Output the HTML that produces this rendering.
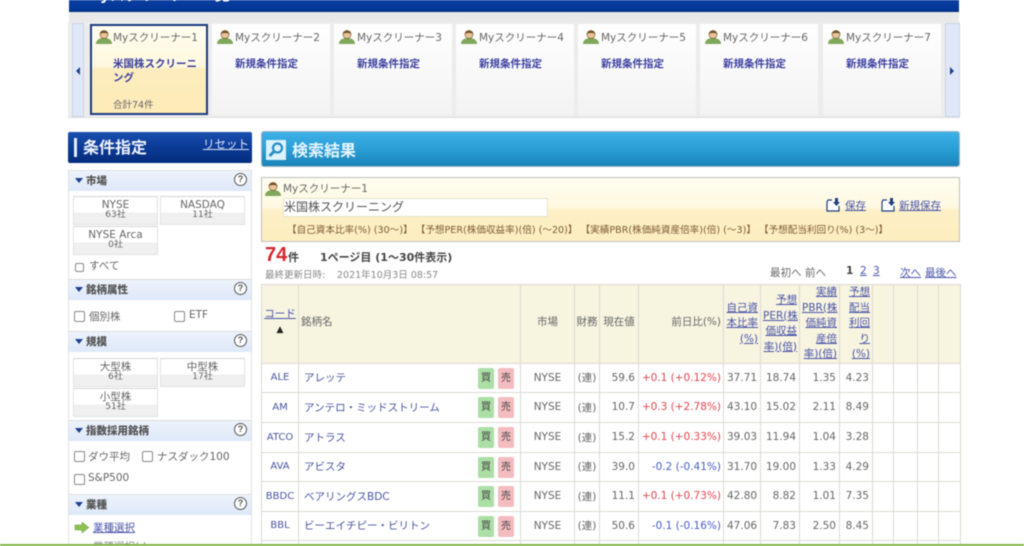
<!DOCTYPE html>
<html lang="ja">
<head>
<meta charset="utf-8">
<title>Myスクリーナー</title>
<style>
html,body{margin:0;padding:0;background:#fff}
body{width:1024px;height:546px;overflow:hidden;position:relative;font-family:"DejaVu Sans","Noto Sans CJK JP",sans-serif;font-size:10.5px;color:#555}
.a{position:absolute;white-space:nowrap}
#wrap{position:absolute;left:0;top:0;width:1024px;height:546px;overflow:hidden;filter:blur(.45px)}
.tab{position:absolute;top:24px;height:91px;background:linear-gradient(#fff,#f3f3f3);box-sizing:border-box}
.tab .nm{position:absolute;left:23px;top:6px;font-size:10.5px;color:#666;white-space:nowrap}
.tab .ic{position:absolute;left:5px;top:5px}
.tab .nw{position:absolute;left:23px;top:32px;font-size:10.5px;font-weight:bold;color:#3c3f9f;white-space:nowrap}
.sh{position:absolute;left:69px;width:182px;height:20px;background:linear-gradient(#eef3fc,#dde8f9);font-size:10.5px;font-weight:bold;color:#555}
.sh b{position:absolute;left:17px;top:2px}
.sh i{position:absolute;left:6px;top:7px;width:0;height:0;border-left:4px solid transparent;border-right:4px solid transparent;border-top:5px solid #1d3f8f}
.q{position:absolute;left:165px;top:2px;width:11px;height:11px;border:1px solid #555;border-radius:50%;text-align:center;font:bold 9px/11px "Liberation Sans",sans-serif;color:#555;background:#fff}
.bt{position:absolute;width:85px;box-sizing:border-box;border:1px solid #e2e2e2;border-top-color:#d4d4d4;background:linear-gradient(#fff 58%,#f0f0f0 58%);text-align:center;font-size:10.5px;line-height:12px;color:#666;padding-top:2px}
.bt small{display:block;font-size:9px;line-height:9px}
.cb{position:absolute;width:9px;height:9px;border:1px solid #888;border-radius:2px;background:#fff}
.lb{position:absolute;font-size:10.5px;color:#666;white-space:nowrap}
table{position:absolute;left:261px;top:284px;border-collapse:collapse;table-layout:fixed;width:699px}
td,th{border:1px solid #dadad4;padding:0 2px;font-weight:normal;font-size:10.5px;color:#666;white-space:nowrap;overflow:hidden}
th{background:#f7f4e0;line-height:15.5px}
th a{color:#4a54a8;text-decoration:underline}
th.w{text-align:right;padding:0 2px;overflow:visible}
td{position:relative;background:#fff;text-align:right;padding:0 3px 1px}
td.c{text-align:center;color:#4a55a0;padding:0 0 1px;font-size:10px}
td.n{text-align:left;color:#4a55a0;padding-left:5px}
td.m{text-align:center}
.r{color:#e2464f}.u{color:#4a5cc8}
td.r,td.u{padding-left:0;padding-right:2px}
.bb,.bs{position:absolute;top:4px;width:16px;height:21px;border-radius:2px;text-align:center;line-height:21px;font-size:10px;color:#444}
.bb{left:179px;background:#abdfa6}
.bs{left:199px;background:#f5bcc0}
</style>
</head>
<body>
<div id="wrap">

<div class="a" style="left:69px;top:0;width:890px;height:12px;background:linear-gradient(#0a3f9f,#03389a 70%,#02307f)"></div>
<div class="a" style="left:69px;top:12px;width:890px;height:10px;background:#e9e9e9"></div>
<div class="a" style="left:85px;top:-16px;font-size:15px;font-weight:bold;color:#fff">Myスクリーナー一覧</div>

<div class="a" style="left:68px;top:22px;width:892px;height:96px;background:#ececec;border-bottom:1px solid #ddd;box-sizing:border-box"></div>
<div class="a" style="left:72px;top:23px;width:12px;height:94px;background:#dfe7f8;border:1px solid #ccd4e6;box-sizing:border-box"></div>
<div class="a" style="left:76px;top:67px;width:0;height:0;border-top:4px solid transparent;border-bottom:4px solid transparent;border-right:4px solid #1d3f8f"></div>
<div class="a" style="left:945px;top:23px;width:15px;height:94px;background:#dfe7f8;border:1px solid #ccd4e6;box-sizing:border-box"></div>
<div class="a" style="left:950px;top:67px;width:0;height:0;border-top:4px solid transparent;border-bottom:4px solid transparent;border-left:4px solid #1d3f8f"></div>

<div class="tab" style="left:90px;width:118px;border:2px solid #1a3b80;background:linear-gradient(#fffdf0,#fff8de 46%,#fdedbe 50%,#fdebb8)">
  <svg class="ic" style="left:4px;top:3px" width="16" height="16" viewBox="0 0 16 16"><path d="M0 15c0-4 3-6 8-6s8 2 8 6z" fill="#7fa85a"/><circle cx="8" cy="5.500" r="4" fill="#e9c49a" stroke="#7a5a30" stroke-width=".7"/><path d="M4 5C4.500 1 11.500 1 12 5 10 3.500 6 3.500 4 5z" fill="#6b4a1f"/></svg>
  <div class="nm" style="left:21px;top:4px">Myスクリーナー1</div>
  <div class="a" style="left:21px;top:31px;width:88px;white-space:normal;font-size:10.500px;line-height:14px;font-weight:bold;color:#3c3f9f">米国株スクリーニング</div>
  <div class="a" style="left:21px;top:71px;font-size:9.500px;color:#666">合計74件</div>
</div>

<div class="tab" style="left:212px;width:118px"><svg class="ic" width="16" height="16" viewBox="0 0 16 16"><path d="M0 15c0-4 3-6 8-6s8 2 8 6z" fill="#7fa85a"/><circle cx="8" cy="5.500" r="4" fill="#e9c49a" stroke="#7a5a30" stroke-width=".7"/><path d="M4 5C4.500 1 11.500 1 12 5 10 3.500 6 3.500 4 5z" fill="#6b4a1f"/></svg><div class="nm">Myスクリーナー2</div><div class="nw">新規条件指定</div></div>
<div class="tab" style="left:334px;width:118px"><svg class="ic" width="16" height="16" viewBox="0 0 16 16"><path d="M0 15c0-4 3-6 8-6s8 2 8 6z" fill="#7fa85a"/><circle cx="8" cy="5.500" r="4" fill="#e9c49a" stroke="#7a5a30" stroke-width=".7"/><path d="M4 5C4.500 1 11.500 1 12 5 10 3.500 6 3.500 4 5z" fill="#6b4a1f"/></svg><div class="nm">Myスクリーナー3</div><div class="nw">新規条件指定</div></div>
<div class="tab" style="left:456px;width:118px"><svg class="ic" width="16" height="16" viewBox="0 0 16 16"><path d="M0 15c0-4 3-6 8-6s8 2 8 6z" fill="#7fa85a"/><circle cx="8" cy="5.500" r="4" fill="#e9c49a" stroke="#7a5a30" stroke-width=".7"/><path d="M4 5C4.500 1 11.500 1 12 5 10 3.500 6 3.500 4 5z" fill="#6b4a1f"/></svg><div class="nm">Myスクリーナー4</div><div class="nw">新規条件指定</div></div>
<div class="tab" style="left:578px;width:118px"><svg class="ic" width="16" height="16" viewBox="0 0 16 16"><path d="M0 15c0-4 3-6 8-6s8 2 8 6z" fill="#7fa85a"/><circle cx="8" cy="5.500" r="4" fill="#e9c49a" stroke="#7a5a30" stroke-width=".7"/><path d="M4 5C4.500 1 11.500 1 12 5 10 3.500 6 3.500 4 5z" fill="#6b4a1f"/></svg><div class="nm">Myスクリーナー5</div><div class="nw">新規条件指定</div></div>
<div class="tab" style="left:700px;width:118px"><svg class="ic" width="16" height="16" viewBox="0 0 16 16"><path d="M0 15c0-4 3-6 8-6s8 2 8 6z" fill="#7fa85a"/><circle cx="8" cy="5.500" r="4" fill="#e9c49a" stroke="#7a5a30" stroke-width=".7"/><path d="M4 5C4.500 1 11.500 1 12 5 10 3.500 6 3.500 4 5z" fill="#6b4a1f"/></svg><div class="nm">Myスクリーナー6</div><div class="nw">新規条件指定</div></div>
<div class="tab" style="left:823px;width:118px"><svg class="ic" width="16" height="16" viewBox="0 0 16 16"><path d="M0 15c0-4 3-6 8-6s8 2 8 6z" fill="#7fa85a"/><circle cx="8" cy="5.500" r="4" fill="#e9c49a" stroke="#7a5a30" stroke-width=".7"/><path d="M4 5C4.500 1 11.500 1 12 5 10 3.500 6 3.500 4 5z" fill="#6b4a1f"/></svg><div class="nm">Myスクリーナー7</div><div class="nw">新規条件指定</div></div>

<!-- Sidebar -->
<div class="a" style="left:68px;top:132px;width:184px;height:31px;background:linear-gradient(#1a4fb0,#0b3a95 50%,#052c7c);border-radius:2px"></div>
<div class="a" style="left:74px;top:138px;width:3px;height:19px;background:#e6eefc"></div>
<div class="a" style="left:83px;top:134px;font-size:16px;font-weight:bold;color:#eef2fb">条件指定</div>
<div class="a" style="left:203px;top:136px;font-size:11.500px;color:#dfe8fb;text-decoration:underline">リセット</div>

<div class="a" style="left:68px;top:170px;width:184px;height:376px;border:1px solid #e0e0e0;border-bottom:0;box-sizing:border-box"></div>

<div class="sh" style="top:171px"><i></i><b>市場</b><span class="q">?</span></div>
<div class="bt" style="left:73px;top:196px;height:29px">NYSE<small>63社</small></div>
<div class="bt" style="left:160px;top:196px;height:29px">NASDAQ<small>11社</small></div>
<div class="bt" style="left:73px;top:226px;height:29px">NYSE Arca<small>0社</small></div>
<div class="cb" style="left:75px;top:263px;width:7px;height:7px"></div>
<div class="lb" style="left:89px;top:258px">すべて</div>

<div class="a" style="left:69px;top:279px;width:182px;height:1px;background:#ddd"></div>
<div class="sh" style="top:280px"><i></i><b>銘柄属性</b><span class="q">?</span></div>
<div class="cb" style="left:74px;top:311px"></div>
<div class="lb" style="left:89px;top:309px">個別株</div>
<div class="cb" style="left:174px;top:311px"></div>
<div class="lb" style="left:189px;top:309px">ETF</div>

<div class="a" style="left:69px;top:331px;width:182px;height:1px;background:#ddd"></div>
<div class="sh" style="top:332px"><i></i><b>規模</b><span class="q">?</span></div>
<div class="bt" style="left:73px;top:358px;height:29px">大型株<small>6社</small></div>
<div class="bt" style="left:160px;top:358px;height:29px">中型株<small>17社</small></div>
<div class="bt" style="left:73px;top:388px;height:29px">小型株<small>51社</small></div>

<div class="a" style="left:69px;top:420px;width:182px;height:1px;background:#ddd"></div>
<div class="sh" style="top:421px"><i></i><b>指数採用銘柄</b><span class="q">?</span></div>
<div class="cb" style="left:74px;top:451px"></div>
<div class="lb" style="left:88px;top:449px">ダウ平均</div>
<div class="cb" style="left:142px;top:451px"></div>
<div class="lb" style="left:157px;top:449px">ナスダック100</div>
<div class="cb" style="left:74px;top:474px"></div>
<div class="lb" style="left:88px;top:472px">S&amp;P500</div>

<div class="a" style="left:69px;top:494px;width:182px;height:1px;background:#ddd"></div>
<div class="sh" style="top:495px"><i></i><b>業種</b><span class="q">?</span></div>
<svg class="a" style="left:74px;top:521px" width="16" height="13" viewBox="0 0 16 13"><path d="M1 4h7V1l7 5.500-7 5.500V9H1z" fill="#8cc152" stroke="#6a9a3a" stroke-width=".5"/></svg>
<div class="lb" style="left:93px;top:520px;color:#4a54a8;text-decoration:underline">業種選択</div>
<div class="lb" style="left:93px;top:539px;color:#888">業種選択(-)</div>

<!-- Results header -->
<div class="a" style="left:261px;top:131px;width:699px;height:36px;box-sizing:border-box;border:1px solid #9fb4c0;border-radius:3px;background:linear-gradient(#3db0e6,#2a9ed6 50%,#1a84ba)"></div>
<svg class="a" style="left:266px;top:140px" width="20" height="20" viewBox="0 0 20 20"><rect width="20" height="20" fill="#dcf2fc"/><circle cx="11.500" cy="8" r="4.500" fill="none" stroke="#2a8fc4" stroke-width="2.200"/><path d="M8 11.500L3.500 16" stroke="#2a8fc4" stroke-width="3"/></svg>
<div class="a" style="left:292px;top:137px;font-size:16px;font-weight:bold;color:#e8f6fd">検索結果</div>

<!-- Condition box -->
<div class="a" style="left:261px;top:177px;width:699px;height:65px;box-sizing:border-box;border:1px solid #bdbdbd;background:linear-gradient(#fffdf0,#fff9e2 46%,#fdf0c6 52%,#fdeec0)"></div>
<svg class="a" style="left:265px;top:181px" width="16" height="16" viewBox="0 0 16 16"><path d="M0 15c0-4 3-6 8-6s8 2 8 6z" fill="#7fa85a"/><circle cx="8" cy="5.500" r="4" fill="#e9c49a" stroke="#7a5a30" stroke-width=".7"/><path d="M4 5C4.500 1 11.500 1 12 5 10 3.500 6 3.500 4 5z" fill="#6b4a1f"/></svg>
<div class="a" style="left:283px;top:181px;font-size:10.500px;color:#666">Myスクリーナー1</div>
<div class="a" style="left:283px;top:198px;width:265px;height:19px;box-sizing:border-box;background:#fff;border:1px solid #e6e2cc;font-size:12px;line-height:17px;color:#555;padding-left:0">米国株スクリーニング</div>
<div class="a" style="left:287px;top:222px;font-size:9.600px;color:#7d5a32">【自己資本比率(%) (30～)】&nbsp;【予想PER(株価収益率)(倍) (～20)】&nbsp;【実績PBR(株価純資産倍率)(倍) (～3)】&nbsp;【予想配当利回り(%) (3～)】</div>
<svg class="a" style="left:826px;top:198px" width="15" height="14" viewBox="0 0 15 14"><path d="M6 2H2L1 4v9h12V8" fill="#fff" stroke="#1d3f7f" stroke-width="1.200"/><path d="M9 0h3v4h2l-3.500 4L7 4h2z" fill="#1d3f7f"/></svg>
<div class="a" style="left:845px;top:198px;font-size:10.500px;color:#4a54a8;text-decoration:underline">保存</div>
<svg class="a" style="left:881px;top:198px" width="15" height="14" viewBox="0 0 15 14"><path d="M6 2H2L1 4v9h12V8" fill="#fff" stroke="#1d3f7f" stroke-width="1.200"/><path d="M9 0h3v4h2l-3.500 4L7 4h2z" fill="#1d3f7f"/></svg>
<div class="a" style="left:899px;top:198px;font-size:10.500px;color:#4a54a8;text-decoration:underline">新規保存</div>

<!-- Count -->
<div class="a" style="left:265px;top:244px;font:bold 20px/23px 'Liberation Sans',sans-serif;color:#d9252e">74</div>
<div class="a" style="left:288px;top:249px;font-size:11px;font-weight:bold;color:#444">件</div>
<div class="a" style="left:320px;top:249px;font-size:11px;font-weight:bold;color:#444">1ページ目 (1～30件表示)</div>
<div class="a" style="left:265px;top:267px;font-size:9.500px;color:#888">最終更新日時:</div>
<div class="a" style="left:337px;top:267px;font-size:9.500px;color:#888">2021年10月3日 08:57</div>
<div class="a" style="left:770px;top:265px;font-size:10.500px;color:#666">最初へ</div>
<div class="a" style="left:805px;top:265px;font-size:10.500px;color:#666">前へ</div>
<div class="a" style="left:846px;top:265px;font-size:10.500px;font-weight:bold;color:#444">1</div>
<div class="a" style="left:860px;top:265px;font-size:10.500px;color:#4a54a8;text-decoration:underline">2</div>
<div class="a" style="left:873px;top:265px;font-size:10.500px;color:#4a54a8;text-decoration:underline">3</div>
<div class="a" style="left:900px;top:265px;font-size:10.500px;color:#4a54a8;text-decoration:underline">次へ</div>
<div class="a" style="left:925px;top:265px;font-size:10.500px;color:#4a54a8;text-decoration:underline">最後へ</div>

<table>
<colgroup><col style="width:37px"><col style="width:222px"><col style="width:54px"><col style="width:25px"><col style="width:39px"><col style="width:85px"><col style="width:37px"><col style="width:39px"><col style="width:40px"><col style="width:33px"><col style="width:21px"><col style="width:24px"><col style="width:21px"><col style="width:22px"></colgroup>
<tr style="height:79px">
<th style="text-align:center;padding:0 0 3px"><a>コード</a><br><span style="font-size:9px;color:#222">▲</span></th>
<th style="text-align:left;padding-bottom:3px">銘柄名</th>
<th style="padding-bottom:3px">市場</th>
<th style="padding:0 0 3px">財務</th>
<th style="padding:0 0 3px">現在値</th>
<th style="text-align:right;padding-bottom:3px">前日比(%)</th>
<th class="w"><a>自己資<br>本比率<br>(%)</a></th>
<th class="w"><a>予想<br>PER(株<br>価収益<br>率)(倍)</a></th>
<th class="w"><a>実績<br>PBR(株<br>価純資<br>産倍<br>率)(倍)</a></th>
<th class="w"><a>予想<br>配当<br>利回<br>り<br>(%)</a></th>
<th></th><th></th><th></th><th></th>
</tr>
<tr style="height:29px"><td class="c">ALE</td><td class="n">アレッテ<span class="bb">買</span><span class="bs">売</span></td><td class="m">NYSE</td><td class="m" style="padding:0 0 1px">(連)</td><td>59.6</td><td class="r">+0.1 (+0.12%)</td><td>37.71</td><td>18.74</td><td>1.35</td><td>4.23</td><td></td><td></td><td></td><td></td></tr>
<tr style="height:30px"><td class="c">AM</td><td class="n">アンテロ・ミッドストリーム<span class="bb">買</span><span class="bs">売</span></td><td class="m">NYSE</td><td class="m" style="padding:0 0 1px">(連)</td><td>10.7</td><td class="r">+0.3 (+2.78%)</td><td>43.10</td><td>15.02</td><td>2.11</td><td>8.49</td><td></td><td></td><td></td><td></td></tr>
<tr style="height:30px"><td class="c">ATCO</td><td class="n">アトラス<span class="bb">買</span><span class="bs">売</span></td><td class="m">NYSE</td><td class="m" style="padding:0 0 1px">(連)</td><td>15.2</td><td class="r">+0.1 (+0.33%)</td><td>39.03</td><td>11.94</td><td>1.04</td><td>3.28</td><td></td><td></td><td></td><td></td></tr>
<tr style="height:29px"><td class="c">AVA</td><td class="n">アビスタ<span class="bb">買</span><span class="bs">売</span></td><td class="m">NYSE</td><td class="m" style="padding:0 0 1px">(連)</td><td>39.0</td><td class="u">-0.2 (-0.41%)</td><td>31.70</td><td>19.00</td><td>1.33</td><td>4.29</td><td></td><td></td><td></td><td></td></tr>
<tr style="height:30px"><td class="c">BBDC</td><td class="n">ベアリングスBDC<span class="bb">買</span><span class="bs">売</span></td><td class="m">NYSE</td><td class="m" style="padding:0 0 1px">(連)</td><td>11.1</td><td class="r">+0.1 (+0.73%)</td><td>42.80</td><td>8.82</td><td>1.01</td><td>7.35</td><td></td><td></td><td></td><td></td></tr>
<tr style="height:29px"><td class="c">BBL</td><td class="n">ビーエイチピー・ビリトン<span class="bb">買</span><span class="bs">売</span></td><td class="m">NYSE</td><td class="m" style="padding:0 0 1px">(連)</td><td>50.6</td><td class="u">-0.1 (-0.16%)</td><td>47.06</td><td>7.83</td><td>2.50</td><td>8.45</td><td></td><td></td><td></td><td></td></tr>
<tr style="height:30px"><td></td><td></td><td></td><td></td><td></td><td></td><td></td><td></td><td></td><td></td><td></td><td></td><td></td><td></td></tr>
</table>

<div class="a" style="left:0;top:544px;width:1024px;height:2px;background:#7fb446"></div>
</div>
</body>
</html>
